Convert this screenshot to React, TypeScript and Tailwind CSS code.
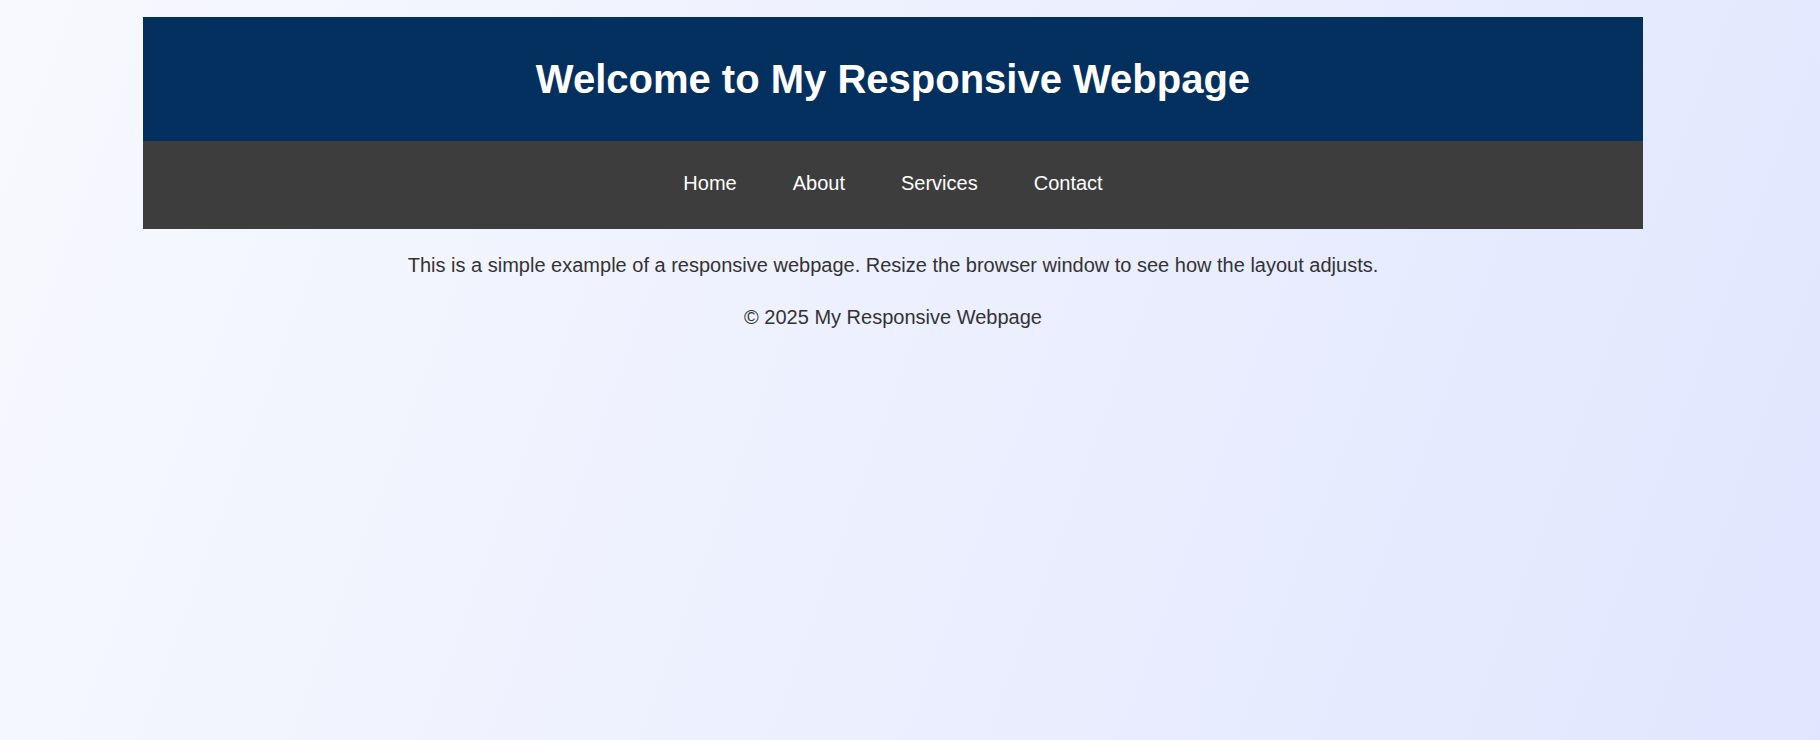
const links = ["Home", "About", "Services", "Contact"];

export default function App() {
  return (
    <div
      className="min-h-screen w-full bg-[linear-gradient(110deg,#f8f9fe_0%,#e0e6fe_100%)] pt-[17px] text-[#333] font-['Liberation_Sans',Arial,sans-serif]"
    >
      <div className="ml-[143px] w-[1500px]">
        {/* Header */}
        <header className="flex h-[124px] items-center justify-center bg-[#04305f]">
          <h1 className="text-[40px] font-bold leading-[46px] text-white">
            Welcome to My Responsive Webpage
          </h1>
        </header>

        {/* Nav */}
        <nav className="flex h-[88px] items-center justify-center gap-[56px] bg-[#3d3d3d] pb-[3px]">
          {links.map((l) => (
            <a key={l} href="#" className="text-[20px] leading-[23px] text-white">
              {l}
            </a>
          ))}
        </nav>

        <p className="mt-[25px] text-center text-[20px] leading-[23px]">
          This is a simple example of a responsive webpage. Resize the browser window to see how the layout adjusts.
        </p>

        <footer className="mt-[29px] text-center text-[20px] leading-[23px]">
          © 2025 My Responsive Webpage
        </footer>
      </div>
    </div>
  );
}
